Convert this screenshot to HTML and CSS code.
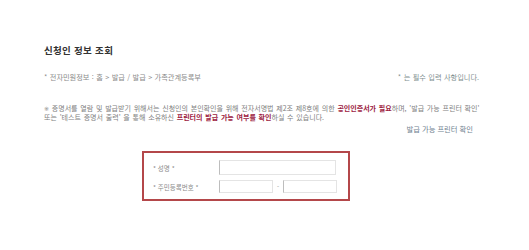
FILE: index.html
```html
<!DOCTYPE html>
<html lang="ko">
  <head>
    <meta charset="UTF-8" />
    <meta name="viewport" content="width=device-width, initial-scale=1.0" />
    <title>신청인 정보 조회</title>
    <link rel="stylesheet" href="styles.css">
  </head>
  <body>
    <div class="page">
      <h1 class="title">신청인 정보 조회</h1>

      <!-- 위치 안내 / 필수 안내 -->
      <div class="meta">
        <span class="location">* 전자민원정보 : 홈 &gt; 발급 / 발급 &gt; 가족관계등록부</span>
        <span class="required">* 는 필수 입력 사항입니다.</span>
      </div>

      <!-- 안내 문구 -->
      <p class="notice">
        <span class="mark">※</span> 증명서를 열람 및 발급받기 위해서는 신청인의 본인확인을 위해 전자서명법 제2조 제8호에 의한 <strong>공인인증서가 필요</strong>하며, '발급 가능 프린터 확인'<br>
        또는 '테스트 증명서 출력' 을 통해 소유하신 <strong>프린터의 발급 가능 여부를 확인</strong>하실 수 있습니다.
      </p>
      <div class="check"><a href="#">발급 가능 프린터 확인</a></div>

      <!-- 신청인 입력 폼 -->
      <form class="applicant">
        <div class="row">
          <label for="name">* 성명 *</label>
          <input type="text" id="name" class="field-name">
        </div>
        <div class="row">
          <label for="rrn1">* 주민등록번호 *</label>
          <input type="text" id="rrn1" class="field-rrn">
          <span class="dash">-</span>
          <input type="password" id="rrn2" class="field-rrn">
        </div>
      </form>
    </div>
  </body>
</html>
```

FILE: styles.css
```css
body {
  margin: 0;
  background: #fff;
  font-family: "Noto Sans CJK KR", "Noto Sans", sans-serif;
  color: #808080;
}

.page {
  padding: 44px 44px 0 44px;
}

/* 제목 */
.title {
  margin: 0;
  font-size: 9.5px;
  line-height: 12px;
  font-weight: bold;
  color: #333;
  letter-spacing: 0.3px;
}

/* 위치 안내 */
.meta {
  display: flex;
  justify-content: space-between;
  margin-top: 17px;
  padding-right: 6px;
  font-size: 7.2px;
  line-height: 8px;
  color: #8a8a8a;
  word-spacing: 0.4px;
}
.required {
  color: #7f9090;
}

/* 안내 문구 */
.notice {
  margin: 23px 0 0;
  font-size: 7px;
  line-height: 9px;
  color: #808080;
  word-spacing: 0.8px;
  white-space: nowrap;
}
.notice .mark {
  font-family: "DejaVu Sans", sans-serif;
  font-size: 6px;
  color: #888;
}
.notice strong {
  color: #9c2140;
}

.check {
  margin-top: 3px;
  padding-right: 12px;
  text-align: right;
  font-size: 7.3px;
  line-height: 9px;
}
.check a {
  color: #6f8190;
  text-decoration: none;
}

/* 입력 폼 */
.applicant {
  width: 186px;
  margin: 17px 0 0 98px;
  padding: 7px 9px 6px 9px;
  border: 2px solid #b4474a;
  display: flex;
  flex-direction: column;
  gap: 5px;
}

.row {
  display: flex;
  align-items: center;
}

.row label {
  width: 66px;
  font-size: 6.5px;
  color: #8a8a8a;
}

.row input {
  box-sizing: border-box;
  margin: 0;
  padding: 0;
  border: 1px solid #e4e4e4;
  border-left-color: #bdbdbd;
  background: #fff;
}

.field-name {
  width: 117px;
  height: 15px;
}

.field-rrn {
  width: 54px;
  height: 13px;
}

.dash {
  width: 10px;
  text-align: center;
  font-size: 6px;
  color: #888;
}
```
